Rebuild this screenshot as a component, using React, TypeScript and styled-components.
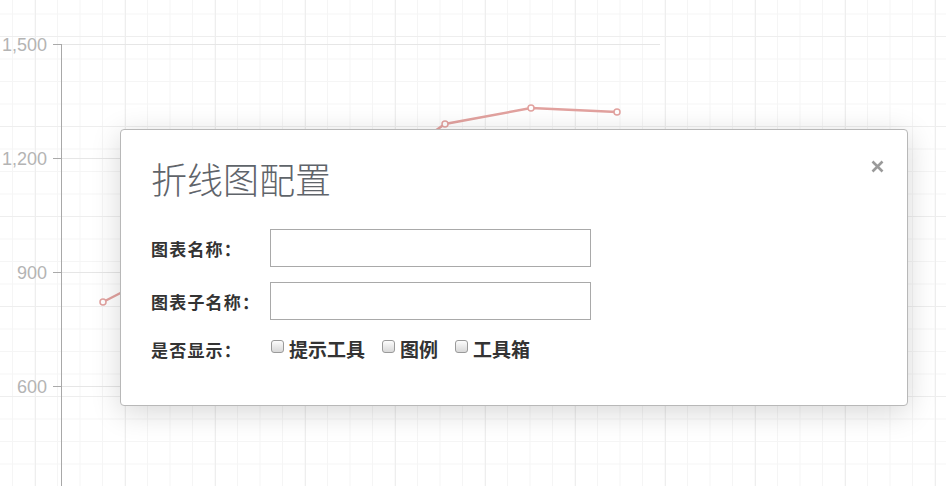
import React from "react";
import styled, { createGlobalStyle } from "styled-components";

const GlobalStyle = createGlobalStyle`
  html, body { margin: 0; padding: 0; background: #fff; }
  body { font-family: "Liberation Sans", "Noto Sans CJK SC", sans-serif; }
  * { box-sizing: border-box; }
`;

const Page = styled.div`
  position: relative;
  width: 946px;
  height: 486px;
  overflow: hidden;
  background-color: #fff;
  background-image:
    linear-gradient(to right, #eeeeee 1px, transparent 1px),
    linear-gradient(to bottom, #eeeeee 1px, transparent 1px),
    linear-gradient(to right, #f5f5f5 1px, transparent 1px),
    linear-gradient(to bottom, #f5f5f5 1px, transparent 1px);
  background-size: 90px 90px, 90px 90px, 22.5px 22.5px, 22.5px 22.5px;
  background-position: 35px 36px, 35px 36px, 12px 13.5px, 12px 13.5px;
`;

const ChartSvg = styled.svg`
  display: block;
`;

const Modal = styled.div`
  position: absolute;
  left: 120px;
  top: 129px;
  width: 788px;
  background: #fff;
  border: 1px solid #b8b8b8;
  border-radius: 4px;
  box-shadow: 0 6px 30px rgba(0, 0, 0, 0.16);
`;

const Header = styled.div`
  display: flex;
  justify-content: space-between;
  align-items: flex-start;
  padding: 28px 23px 0 30px;
`;

const Title = styled.h2`
  margin: 0;
  font-family: "Noto Sans CJK SC", sans-serif;
  font-size: 36px;
  line-height: 40px;
  font-weight: 300;
  color: #5f646a;
`;

const CloseButton = styled.button`
  display: flex;
  margin-top: 2px;
  padding: 0;
  border: 0;
  background: none;
  cursor: pointer;
`;

const Form = styled.div`
  display: flex;
  flex-direction: column;
  gap: 15px;
  padding: 31px 30px 42px;
`;

const Row = styled.div<{ $h: number }>`
  display: grid;
  grid-template-columns: 119px 321px;
  align-items: center;
  height: ${(p) => p.$h}px;
`;

const Label = styled.span`
  font-family: "Noto Sans CJK SC", sans-serif;
  font-size: 17px;
  font-weight: 700;
  letter-spacing: 1.2px;
  color: #333;
  white-space: nowrap;
`;

const TextInput = styled.input`
  width: 321px;
  height: 38px;
  border: 1px solid #a9a9a9;
  border-radius: 0;
  padding: 0 8px;
  font-size: 16px;
  outline: none;
`;

const CheckGroup = styled.div`
  display: flex;
  align-items: center;
  gap: 17px;
  padding-left: 1px;
  white-space: nowrap;
`;

const CheckItem = styled.label`
  display: flex;
  align-items: center;
  gap: 5px;
  font-family: "Noto Sans CJK SC", sans-serif;
  font-size: 19px;
  line-height: 28px;
  font-weight: 700;
  color: #333;
`;

const Box = styled.input`
  appearance: none;
  -webkit-appearance: none;
  width: 13px;
  height: 13px;
  margin: 0 0 6px 0;
  border: 1px solid #9a9a9a;
  border-radius: 3px;
  background: linear-gradient(to bottom, #fdfdfd 0%, #e6e6e6 60%, #d8d8d8 100%);
`;

const ticks = [
  { y: 44, label: "1,500" },
  { y: 158, label: "1,200" },
  { y: 272, label: "900" },
  { y: 386, label: "600" },
];

const points: [number, number][] = [
  [103, 302],
  [188.5, 258],
  [274, 222],
  [359.5, 184],
  [445, 124],
  [531, 108],
  [617, 112],
];

function Chart() {
  return (
    <ChartSvg width={946} height={486} viewBox="0 0 946 486">
      {ticks.map((t) => (
        <g key={t.label}>
          <line x1={61} x2={660} y1={t.y + 0.5} y2={t.y + 0.5} stroke="#e6e6e6" strokeWidth={1} />
          <line x1={53} x2={61} y1={t.y + 0.5} y2={t.y + 0.5} stroke="#aaa" strokeWidth={1} />
          <text
            x={47}
            y={t.y + 6.5}
            textAnchor="end"
            fontFamily='"Liberation Sans", Arial, sans-serif'
            fontSize={18}
            fill="#b4b4b4"
          >
            {t.label}
          </text>
        </g>
      ))}
      <line x1={61.5} x2={61.5} y1={44} y2={486} stroke="#a8a8a8" strokeWidth={1} />
      <polyline
        points={points.map((p) => p.join(",")).join(" ")}
        fill="none"
        stroke="#e2a29f"
        strokeWidth={2.4}
      />
      {points.map(([x, y]) => (
        <circle key={x} cx={x} cy={y} r={3} fill="#fff" stroke="#e2a29f" strokeWidth={1.5} />
      ))}
    </ChartSvg>
  );
}

export default function App() {
  return (
    <>
      <GlobalStyle />
      <Page>
        <Chart />
        <Modal>
          <Header>
            <Title>折线图配置</Title>
            <CloseButton aria-label="关闭">
              <svg width="13" height="13" viewBox="0 0 13 13">
                <path d="M1.5 1.5 L11.5 11.5 M11.5 1.5 L1.5 11.5" stroke="#9a9a9a" strokeWidth="2.6" strokeLinecap="butt" />
              </svg>
            </CloseButton>
          </Header>
          <Form>
            <Row $h={38}>
              <Label>图表名称：</Label>
              <TextInput type="text" />
            </Row>
            <Row $h={38}>
              <Label>图表子名称：</Label>
              <TextInput type="text" />
            </Row>
            <Row $h={28}>
              <Label>是否显示：</Label>
              <CheckGroup>
                <CheckItem>
                  <Box type="checkbox" />
                  提示工具
                </CheckItem>
                <CheckItem>
                  <Box type="checkbox" />
                  图例
                </CheckItem>
                <CheckItem>
                  <Box type="checkbox" />
                  工具箱
                </CheckItem>
              </CheckGroup>
            </Row>
          </Form>
        </Modal>
      </Page>
    </>
  );
}
